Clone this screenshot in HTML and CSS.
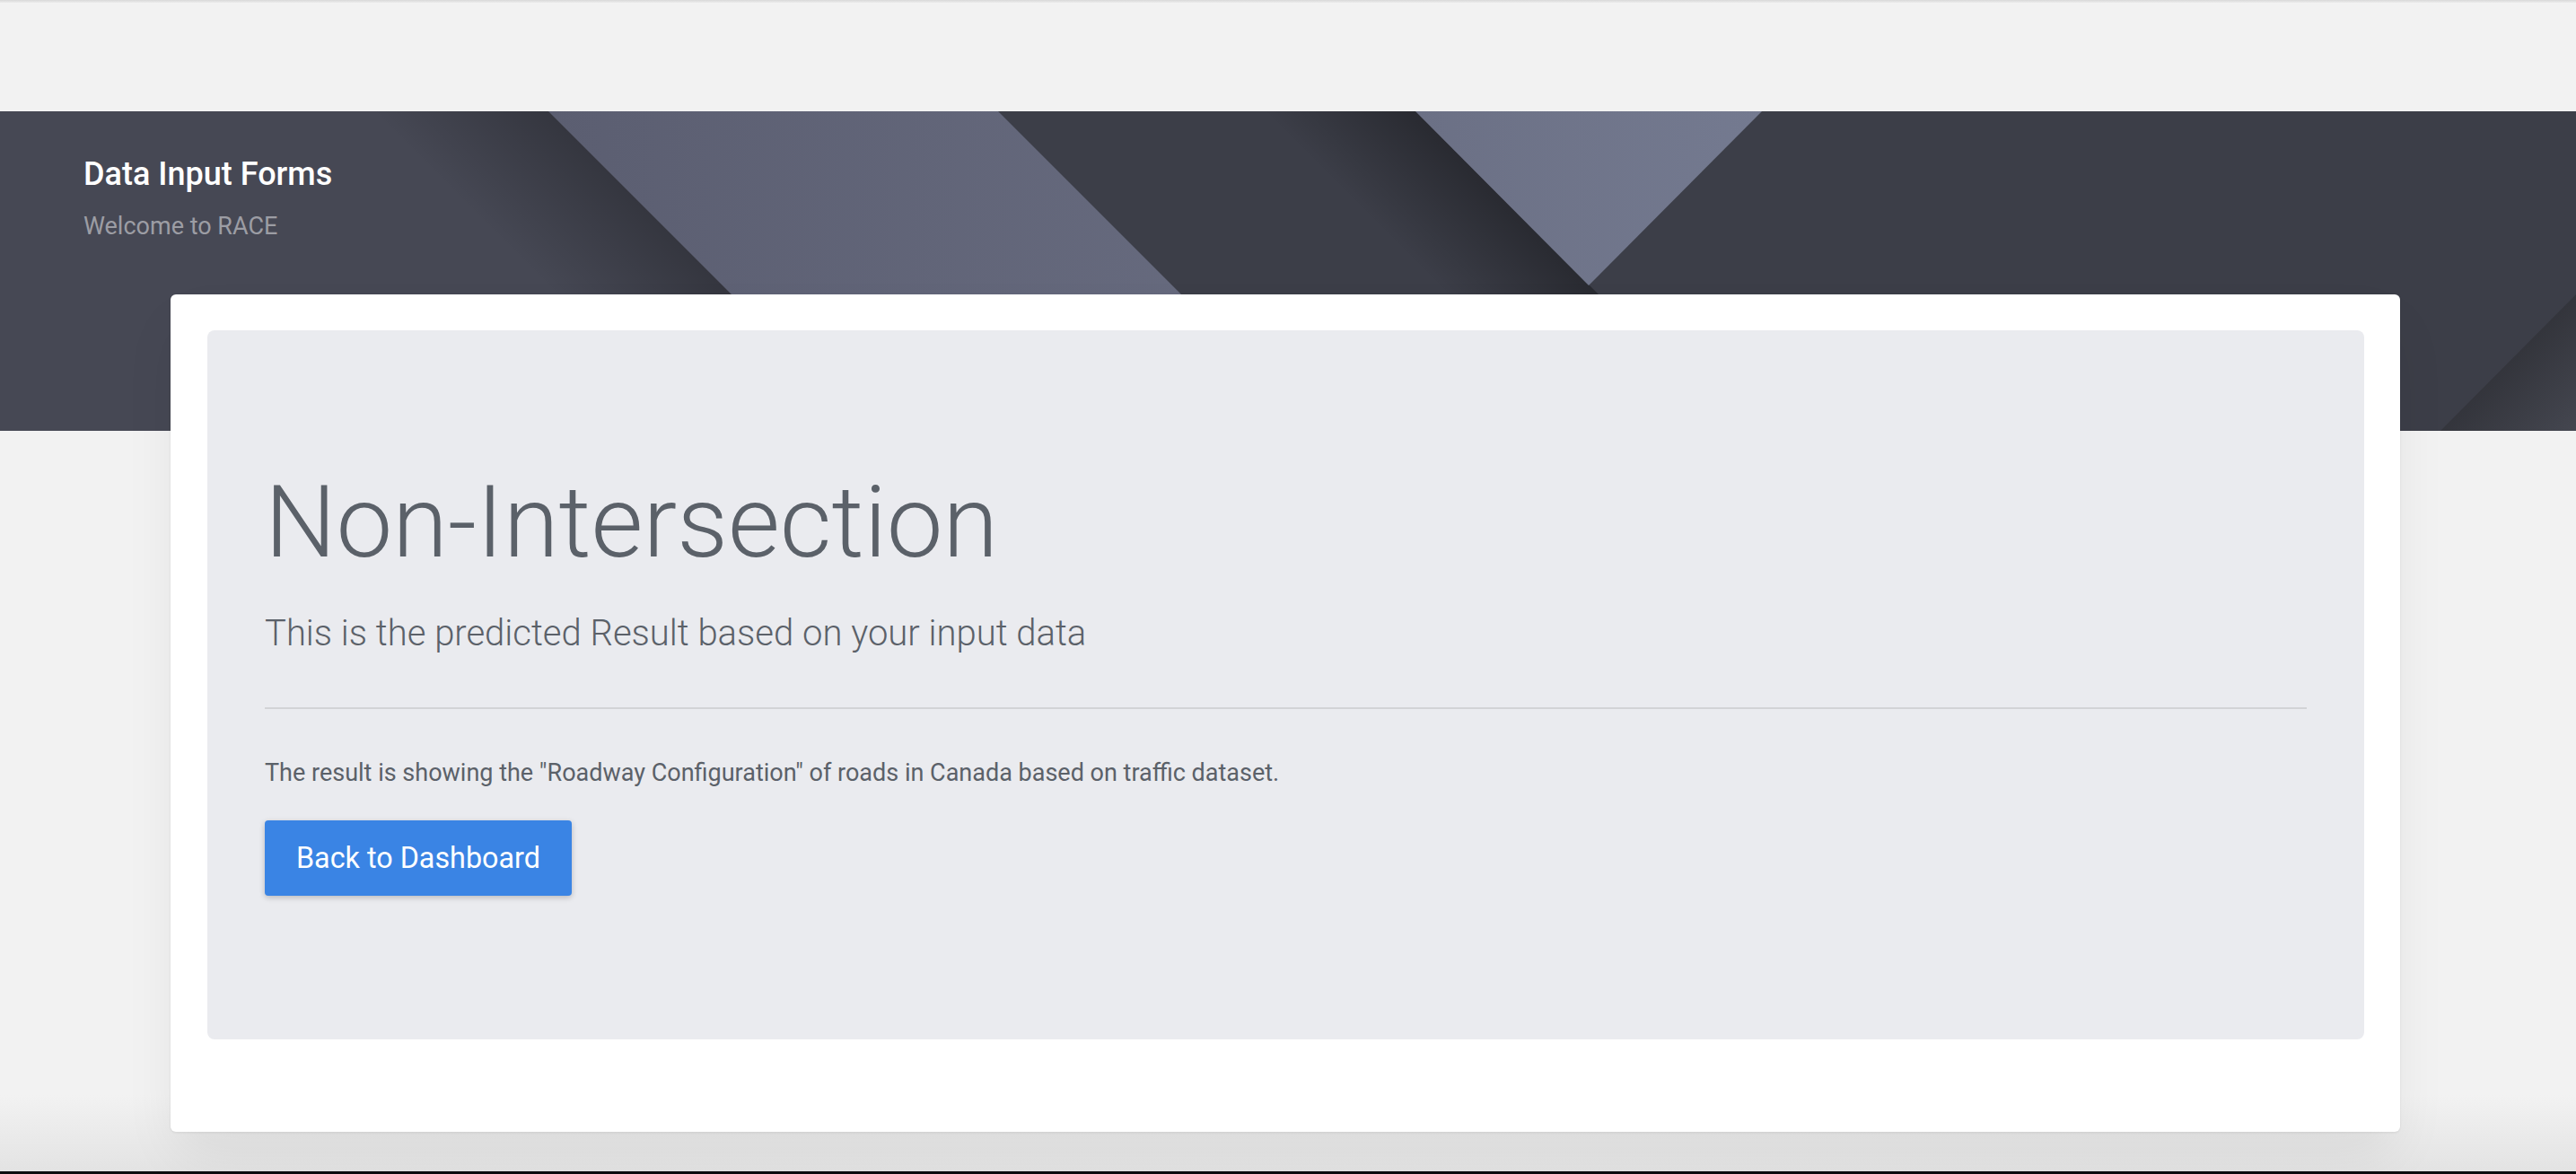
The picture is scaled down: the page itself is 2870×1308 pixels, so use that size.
FILE: index.html
```html
<!DOCTYPE html>
<html lang="en">
<head>
<meta charset="utf-8">
<title>Data Input Forms</title>
<link rel="stylesheet" href="styles.css">
</head>
<body>
<div class="topline"></div>
<div class="topbar"></div>
<header class="hero">
  <svg class="hero-bg" width="2870" height="356" viewBox="0 0 2870 356" preserveAspectRatio="none" aria-hidden="true">
    <defs>
      <linearGradient id="bandG" x1="611" y1="0" x2="1468" y2="0" gradientUnits="userSpaceOnUse">
        <stop offset="0" stop-color="#5b5e71"/>
        <stop offset="1" stop-color="#686c80"/>
      </linearGradient>
      <linearGradient id="triG" x1="1577" y1="0" x2="1963" y2="0" gradientUnits="userSpaceOnUse">
        <stop offset="0" stop-color="#6b7085"/>
        <stop offset="1" stop-color="#747a90"/>
      </linearGradient>
      <linearGradient id="sh1" x1="789" y1="178" x2="690" y2="277" gradientUnits="userSpaceOnUse">
        <stop offset="0" stop-color="#000" stop-opacity="0.25"/>
        <stop offset="1" stop-color="#000" stop-opacity="0"/>
      </linearGradient>
      <linearGradient id="sh2" x1="1755" y1="178" x2="1670" y2="263" gradientUnits="userSpaceOnUse">
        <stop offset="0" stop-color="#000" stop-opacity="0.32"/>
        <stop offset="1" stop-color="#000" stop-opacity="0"/>
      </linearGradient>
      <linearGradient id="sh3" x1="2795" y1="280" x2="2870" y2="355" gradientUnits="userSpaceOnUse">
        <stop offset="0" stop-color="#2e2f34" stop-opacity="0.6"/>
        <stop offset="1" stop-color="#4a4c55" stop-opacity="0.6"/>
      </linearGradient>
    </defs>
    <rect x="0" y="0" width="2870" height="356" fill="#3c3e48"/>
    <polygon points="0,0 611,0 967,356 0,356" fill="#464854"/>
    <polygon points="0,0 611,0 967,356 0,356" fill="url(#sh1)"/>
    <polygon points="1112,0 1577,0 1933,356 1468,356" fill="url(#sh2)"/>
    <polygon points="611,0 1112,0 1468,356 967,356" fill="url(#bandG)"/>
    <polygon points="1577,0 1963,0 1770,194" fill="url(#triG)"/>
    <polygon points="2719,356 2870,204 2870,356" fill="url(#sh3)"/>
  </svg>
  <div class="hero-text">
    <h2 class="hero-title">Data Input Forms</h2>
    <p class="hero-sub">Welcome to RACE</p>
  </div>
</header>
<main class="content">
  <section class="card">
    <div class="panel">
      <h1 class="display">Non-Intersection</h1>
      <p class="lead">This is the predicted Result based on your input data</p>
      <div class="rule"></div>
      <p class="note">The result is showing the "Roadway Configuration" of roads in Canada based on traffic dataset.</p>
      <a class="btn" href="#">Back to Dashboard</a>
    </div>
  </section>
</main>
<div class="bottombar"></div>
</body>
</html>
```
FILE: styles.css
```css
* { box-sizing: border-box; }
html, body { margin: 0; padding: 0; }
body {
  height: 1308px;
  overflow: hidden;
  display: flex;
  flex-direction: column;
  background: linear-gradient(to bottom, #f2f2f2 0, #f2f2f2 1220px, #e3e3e3 1305px);
  font-family: Roboto, "Liberation Sans", Arial, sans-serif;
}
.topline {
  height: 3px;
  background: linear-gradient(to bottom, #d9d9d9, #ececec);
  flex: none;
}
.topbar { height: 121px; flex: none; }
.hero {
  position: relative;
  height: 356px;
  flex: none;
  overflow: hidden;
  background: #3c3e48;
}
.hero-bg { position: absolute; left: 0; top: 0; display: block; }
.hero-text {
  position: relative;
  padding: 49px 0 0 93px;
}
.hero-title {
  margin: 0;
  font-size: 36px;
  line-height: 43px;
  font-weight: 500;
  color: #ffffff;
}
.hero-sub {
  margin: 16px 0 0;
  font-size: 27px;
  line-height: 40px;
  font-weight: 400;
  color: #9c9da4;
}
.content {
  flex: 1;
  position: relative;
  margin-top: -152px;
  padding: 0 196px 0 190px;
}
.card {
  background: #ffffff;
  border-radius: 6px;
  padding: 40px 40px 103px 41px;
  box-shadow: 0 1px 3px rgba(0,0,0,0.08), 0 30px 60px -10px rgba(0,0,0,0.08);
}
.panel {
  background: #eaebef;
  border-radius: 8px;
  padding: 147px 64px 160px;
  color: #5b6169;
}
.display {
  margin: 0 0 27px;
  font-size: 112px;
  line-height: 134px;
  font-weight: 300;
  color: #5b6169;
}
.lead {
  margin: 0;
  font-size: 40px;
  line-height: 60px;
  font-weight: 300;
  color: #5b6169;
}
.rule {
  margin: 52px 0 50px;
  height: 2px;
  background: rgba(0,0,0,0.1);
}
.note {
  margin: 0 0 32px;
  font-size: 27px;
  line-height: 42px;
  font-weight: 400;
  color: #5b6169;
}
.btn {
  display: inline-block;
  height: 84px;
  line-height: 84px;
  padding: 0 35px;
  background: #3a84e4;
  color: #ffffff;
  font-size: 32.3px;
  font-weight: 400;
  text-decoration: none;
  border-radius: 4px;
  box-shadow: 0 2px 6px rgba(0,0,0,0.22);
}
.bottombar {
  height: 3px;
  background: #0d0d0f;
  flex: none;
}
```
